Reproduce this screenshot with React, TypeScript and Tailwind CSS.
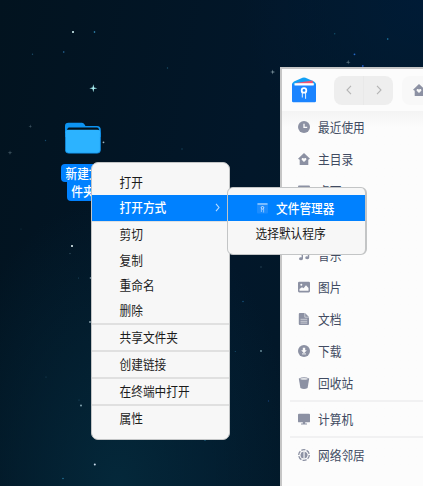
import type { ReactNode } from "react";

const stars: [number, number, number, string][] = [
  [73, 32, 1, "#dff"], [94.5, 32, 0.8, "#3d9fd0"], [63.7, 52, 0.8, "#2a6fa5"], [32.5, 54.3, 0.7, "#1c4c68"],
  [167.5, 68, 0.7, "#1d5069"], [334.7, 33.7, 0.7, "#14506b"], [387.7, 39, 0.8, "#2384b4"], [354.5, 54.3, 0.9, "#2468c8"],
  [362.8, 66, 0.9, "#1d58c0"], [45.5, 140.5, 0.7, "#17486b"], [103.5, 142.3, 0.9, "#9bb3bd"], [182, 149, 0.7, "#174562"],
  [72, 246, 1, "#eff"], [70, 253.6, 0.7, "#3c5968"], [21, 229, 0.6, "#183848"], [90.5, 278, 0.8, "#8fa7b2"],
  [90, 322, 0.9, "#8fa7b2"], [261, 267, 0.7, "#2d4c5b"], [243, 301.5, 0.8, "#155078"], [261, 351, 0.9, "#7195a2"],
  [235.3, 351.5, 0.6, "#174f70"], [268.5, 401, 0.7, "#173f74"], [81, 405.5, 0.9, "#8fb0bd"], [79, 400, 0.6, "#24506a"],
  [46, 377, 0.5, "#24506a"], [94.8, 464.5, 1, "#cde"], [63, 478.5, 0.8, "#257296"], [205, 440, 0.8, "#257296"], [78.5, 278, 0.5, "#24506a"],
];
const sparkles: [number, number, number, string][] = [
  [93.3, 88.3, 4, "#a8eef0"], [272.7, 72, 2.6, "#7b929c"], [348.2, 62.2, 2.4, "#57717f"], [30.3, 126.3, 2, "#3d5360"], [10, 152.7, 2.4, "#425763"],
];

function Sky() {
  return (
    <svg className="absolute inset-0" width="423" height="486">
      {stars.map(([x, y, r, c], i) => <circle key={i} cx={x} cy={y} r={r} fill={c} />)}
      {sparkles.map(([x, y, s, c], i) => (
        <path key={i} fill={c} transform={`translate(${x} ${y}) scale(${s})`} d="M0-1 .2-.2 1 0 .2.2 0 1-.2.2-1 0-.2-.2Z" />
      ))}
    </svg>
  );
}

const glyphs: Record<string, ReactNode> = {
  clock: <><circle cx="6" cy="6" r="6" /><path d="M6 2.8V6.4H9.2" fill="none" stroke="#fcfcfc" strokeWidth="1.3" /></>,
  home: <path fillRule="evenodd" d="M6 0 12 5.8 10.3 6.8V12H1.7V6.8L0 5.8ZM6 8.9 8.3 6.7C8.8 5.2 7 4.5 6 5.6 5 4.5 3.2 5.2 3.7 6.7Z" />,
  desktop: <path d="M1 .5H11Q12 .5 12 1.5V9H0V1.5Q0 .5 1 .5Z" />,
  music: <path d="M3.2 2 5 1.4V9.6A2 1.5 0 1 1 3.7 8.3ZM9.4 1 11.2.5V8.6A2 1.5 0 1 1 9.9 7.4Z" />,
  image: <><rect y=".8" width="12" height="10.6" rx="1.3" /><path d="M1.5 9.7V8L4 6.2 5.5 7.2 8 4.2 10.5 7V9.7Z" fill="#fcfcfc" /><circle cx="3.3" cy="3.7" r="1" fill="#fcfcfc" /></>,
  file: <><path d="M1.8 0H7L11 4V11Q11 12 10 12H1.8Q.8 12 .8 11V1Q.8 0 1.8 0Z" /><path d="M6.8 0V4.2H11M2.5 6.3H9.2M2.5 8.3H9.2M2.5 10.1H9.2" fill="none" stroke="#e4e5e9" strokeWidth=".7" /></>,
  download: <><circle cx="6" cy="6" r="6" /><path d="M4.8 2.7H7.2V5.2H8.8L6 8.2 3.2 5.2H4.8Z" fill="#fcfcfc" /><path d="M4 8.9H8" stroke="#fcfcfc" strokeWidth=".9" /></>,
  trash: <><path d="M.8 1.5Q6-.9 11.2 1.5L9.6 11Q6 12.8 2.4 11Z" /><ellipse cx="6" cy="1.9" rx="3.8" ry=".8" fill="#e4e6ea" /></>,
  computer: <path d="M1 .8H11Q12 .8 12 1.8V8.4Q12 9.3 11 9.3H1Q0 9.3 0 8.4V1.8Q0 .8 1 .8ZM4.8 9.3H7.2V10.6H9V11.4H3V10.6H4.8Z" />,
  network: <><circle cx="6" cy="6" r="5.3" fill="none" stroke="#8c91a3" strokeWidth="1.3" strokeDasharray="4.2 1.2" /><path d="M5.5 2.5V9.5L3 8.5 2.4 6 3.3 3.5ZM6.6 2.5 9 4 9.7 6 8.7 8.6 6.6 9.5Z" /></>,
};

function Glyph({ name }: { name: string }) {
  return <svg className="size-3 shrink-0" viewBox="0 0 12 12" fill="#8c91a3">{glyphs[name]}</svg>;
}

function Logo() {
  return (
    <svg className="shrink-0" width="24" height="26" viewBox="0 0 24 26">
      <path d="M0 6.5 2 4.5 10.5.8Q12 .2 13.5.8L22 4.5 24 6.5V10H0Z" fill="#12a0f5" />
      <path d="M4 6 20.5 3.5 21.5 8H4Z" fill="#ef5475" />
      <path d="M2.5 6.2H21.8V9H2.5Z" fill="#fff" />
      <path d="M0 6.8 2.5 8.4H21.5L24 6.8V24Q24 25.3 22.7 25.3H1.3Q0 25.3 0 24Z" fill="#1b84ff" />
      <circle cx="12" cy="13.4" r="2.3" fill="none" stroke="#fff" strokeWidth="1.8" />
      <path d="M10.3 15.5V20.5M13.6 15.5V21.8" stroke="#fff" strokeWidth=".9" />
    </svg>
  );
}

function Place({ icon, label }: { icon: string; label: string }) {
  return (
    <div className="flex h-8 items-center gap-2 pl-4 text-[11.7px] text-[#414b62]">
      <Glyph name={icon} />
      <span className="-mt-px scale-y-108">{label}</span>
    </div>
  );
}

function FileWindow() {
  const rule = <div className="my-[1px] ml-2 h-[2px] bg-[#f1f1f2]" />;
  return (
    <div className="absolute top-[67px] left-[280px] h-[430px] w-[200px] border-2 border-[#c6c6c6] bg-[#fcfcfc]">
      <div className="flex h-[42px] items-center pl-[10px]">
        <Logo />
        <div className="ml-[18px] flex h-[29px] w-[59px] shrink-0 rounded-lg bg-[#eeeeee]">
          <div className="flex flex-1 items-center justify-center border-r border-[#e9e9e9]">
            <svg width="6" height="10" fill="none" stroke="#b4b4b4" strokeWidth="1.1"><path d="M5 .8 1 5 5 9.2" /></svg>
          </div>
          <div className="flex flex-1 items-center justify-center">
            <svg width="6" height="10" fill="none" stroke="#b4b4b4" strokeWidth="1.1"><path d="M1 .8 5 5 1 9.2" /></svg>
          </div>
        </div>
        <div className="ml-[9px] flex h-[29px] w-20 shrink-0 items-center rounded-lg bg-[#f8f8f8] pl-[11px]"><Glyph name="home" /></div>
      </div>
      <div className="bg-linear-to-b from-[#f4f4f4] to-[#fcfcfc] to-[16px]">
        <Place icon="clock" label="最近使用" />
        <Place icon="home" label="主目录" />
        <Place icon="desktop" label="桌面" />
        <div className="h-8" />
        <Place icon="music" label="音乐" />
        <Place icon="image" label="图片" />
        <Place icon="file" label="文档" />
        <Place icon="download" label="下载" />
        <Place icon="trash" label="回收站" />
        {rule}
        <Place icon="computer" label="计算机" />
        {rule}
        <Place icon="network" label="网络邻居" />
      </div>
    </div>
  );
}

function Item({ label, arrow }: { label: string; arrow?: boolean }) {
  return (
    <div className={arrow ? "flex h-[25.3px] items-center justify-between bg-[#0081ff] pr-[9px] pl-[27.5px] font-medium text-white" : "flex h-[25.3px] items-center pl-[27.5px]"}>
      <span className="-mt-[1.5px] scale-y-108">{label}</span>
      {arrow && <svg width="5" height="9" fill="none" stroke="#b9dcff" strokeWidth="1.1"><path d="M1 .8 4 4.5 1 8.2" /></svg>}
    </div>
  );
}

const Divider = () => <div className="h-[1.6px] bg-[#e0e0e0]" />;

function ContextMenu() {
  return (
    <div className="absolute top-[162px] left-[91px] h-[277.5px] w-[139px] rounded-[7px] border border-[#c3c5c6] bg-[#f7f7f7] pt-[7px] text-[11.7px] text-[#1b1b1b]">
      <Item label="打开" />
      <Item label="打开方式" arrow />
      <Divider />
      <Item label="剪切" />
      <Item label="复制" />
      <Item label="重命名" />
      <Item label="删除" />
      <Divider />
      <Item label="共享文件夹" />
      <Divider />
      <Item label="创建链接" />
      <Divider />
      <Item label="在终端中打开" />
      <Divider />
      <Item label="属性" />
    </div>
  );
}

function SubMenu() {
  return (
    <div className="absolute top-[187px] left-[227px] h-[68px] w-[140px] rounded-[6px] border border-r-2 border-[#c3c5c6] bg-[#f7f7f7] pt-[7px] text-[11.7px] text-[#1b1b1b]">
      <div className="flex h-[26px] items-center gap-2 bg-[#0081ff] pl-[29px] font-medium text-white">
        <svg width="11" height="12" viewBox="0 0 11 12" fill="none">
          <rect y="1" width="11" height="10.5" rx="1" fill="#1b8cff" />
          <path d="M.5 2H10.5" stroke="#b9dcff" strokeWidth="1.2" />
          <circle cx="5.5" cy="5.8" r="1.3" stroke="#cfe6ff" />
          <path d="M4.4 7V10M6.6 7V10.5" stroke="#a5d0ff" strokeWidth=".8" />
        </svg>
        <span className="-mt-px scale-y-108">文件管理器</span>
      </div>
      <div className="flex h-[25px] items-center pl-[27.5px]"><span className="-mt-[1.5px] scale-y-108">选择默认程序</span></div>
    </div>
  );
}

function DesktopFolder() {
  return (
    <div className="absolute top-[122px] left-[61px] flex w-[44px] flex-col items-center">
      <svg width="36" height="32" viewBox="0 0 36 32">
        <path d="M0 4Q0 .8 3.5.8H17Q19 .8 20.5 4H32Q35.8 4 35.8 8V15H0Z" fill="#0d94f2" />
        <path d="M2.3 7.5Q2.5 5.6 4 5.6H32Q33.5 5.6 34 7.5V9H2.3Z" fill="#03101a" />
        <path d="M.5 11Q.5 7.8 3.5 7.8H32.3Q35.3 7.8 35.3 11V28Q35.3 31 32.3 31H3.5Q.5 31 .5 28Z" fill="#2cb3ff" />
        <path d="M.4 11V28Q.4 31.2 3.5 31.2H32.3Q35.4 31.2 35.4 28V11" fill="none" stroke="#1190e8" strokeWidth=".8" />
      </svg>
      <div className="mt-[10px] flex flex-col items-center text-[11.7px] leading-[18px] font-medium whitespace-nowrap text-white">
        <span className="h-[18px] rounded-[4px] bg-[#0081ff] px-1"><span className="inline-block scale-y-108">新建文</span></span>
        <span className="h-[19px] rounded-b-[4px] bg-[#0081ff] px-1"><span className="inline-block scale-y-108">件夹</span></span>
      </div>
    </div>
  );
}

export default function App() {
  return (
    <div className="relative h-[486px] w-[423px] overflow-hidden bg-[#021525] bg-[radial-gradient(circle_at_100%_0%,#001b36_0%,transparent_28%),radial-gradient(ellipse_at_28%_100%,#04283a_0%,transparent_42%),linear-gradient(100deg,#02131f,#02172a_55%,#021a26)] font-['Noto_Sans_CJK_SC',sans-serif]">
      <Sky />
      <DesktopFolder />
      <FileWindow />
      <ContextMenu />
      <SubMenu />
    </div>
  );
}
